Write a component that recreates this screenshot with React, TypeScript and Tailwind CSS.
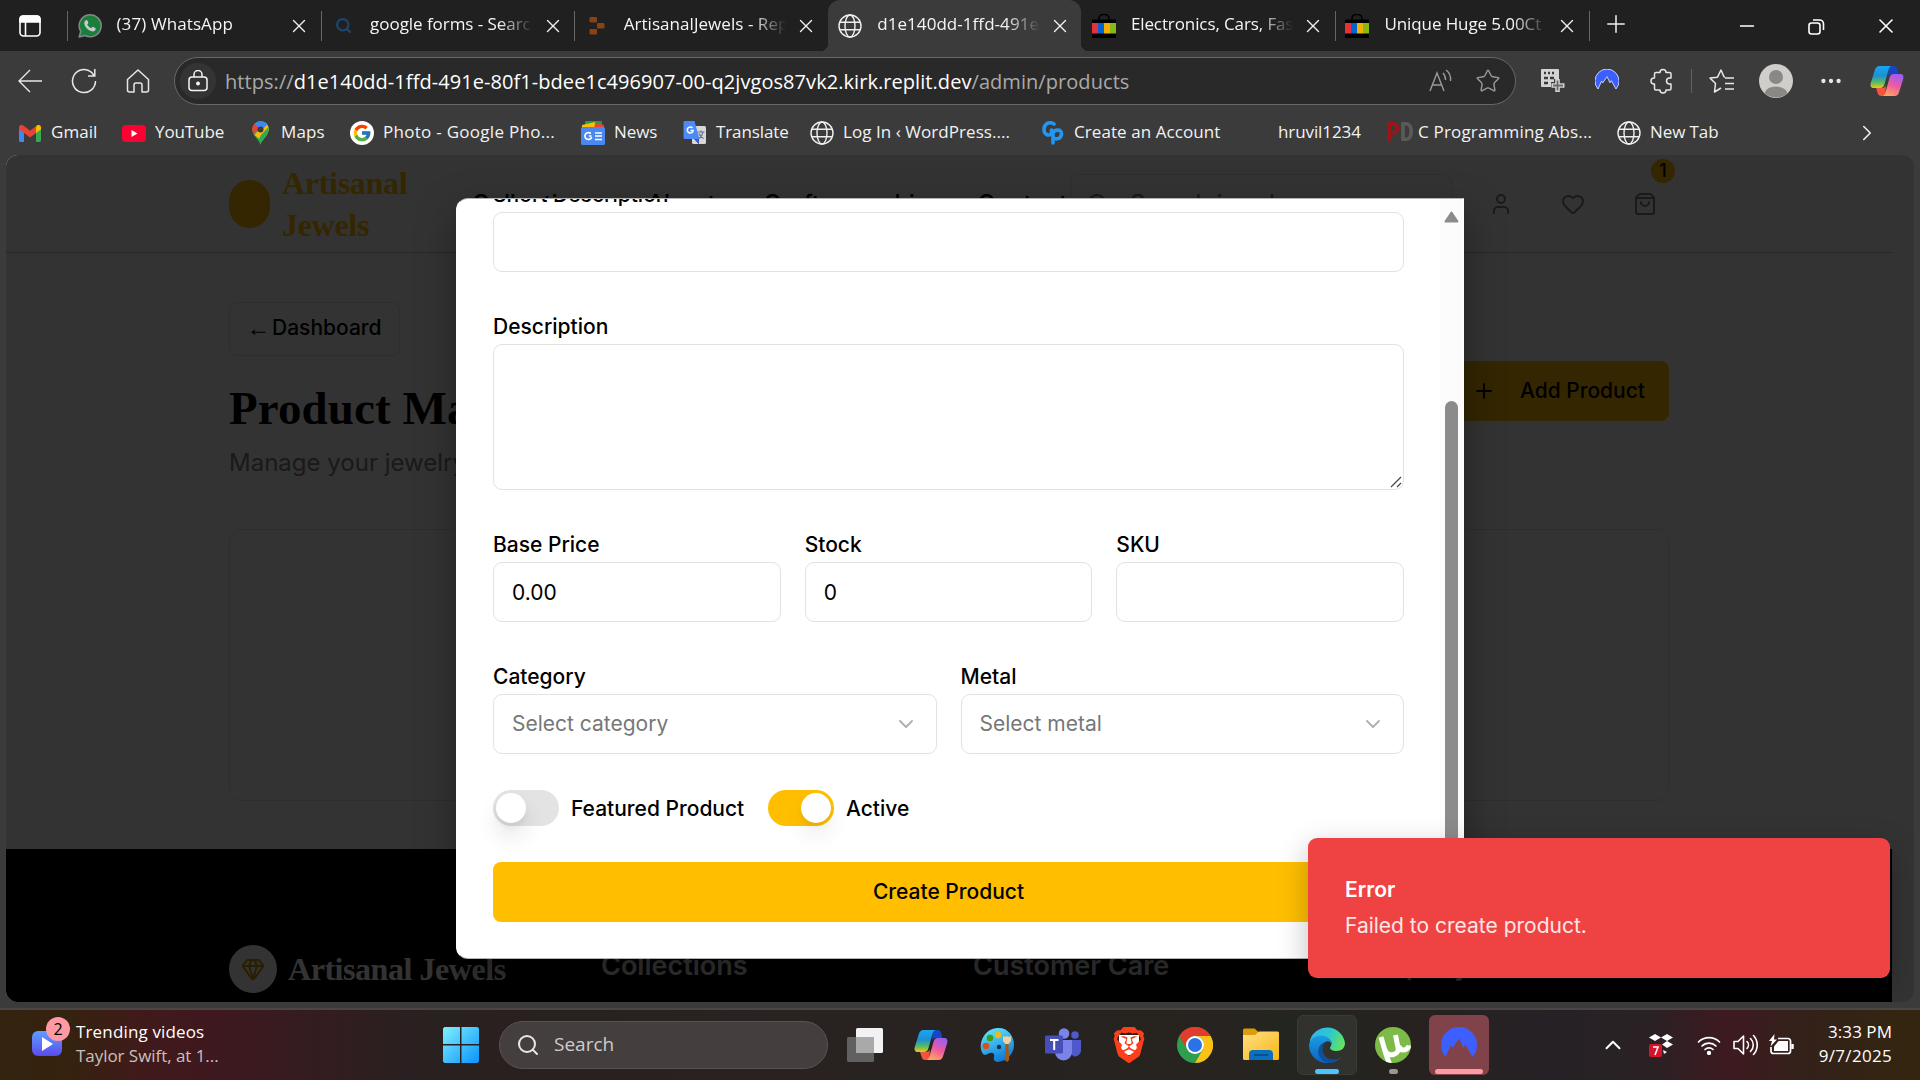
import React from "react";
import {
  ChevronDown, ChevronRight, ChevronUp, Gem, Heart, Minus, MoreHorizontal, Plus,
  Search, ShoppingBag, Star, User, X,
} from "lucide-react";
import { FcGoogle } from "react-icons/fc";
import { SiBrave } from "react-icons/si";

function Globe({ size = 24 }: { size?: number }) {
  return (
    <svg width={size} height={size} viewBox="0 0 24 24" fill="none" stroke="#f0f0f0" strokeWidth="1.4">
      <circle cx="12" cy="12" r="11" />
      <ellipse cx="12" cy="12" rx="5" ry="11" />
      <path d="M2 8.2h20M2 15.8h20" />
    </svg>
  );
}

function WhatsApp() {
  return (
    <svg width="24" height="24" viewBox="0 0 24 24">
      <path d="M1.2 23l1.500-5.600A11 11 0 1 1 7 21.500z" fill="#1b7f3c" stroke="#828a85" strokeWidth="1.500" strokeLinejoin="round" />
      <path d="M8 6.300c.6-.4 1.200-.2 1.400.3l.9 2.100c.1.400 0 .7-.3 1l-.8.9c.9 1.700 2.200 2.900 4 3.700l1.100-1.200c.3-.3.600-.4 1-.2l2 1c.4.2.500.5.400 1-.3 1.700-1.600 2.600-3 2.500C10.500 17 6.500 13 6.300 9.300c0-1.300.7-2.400 1.700-3z" fill="#c9cdca" />
    </svg>
  );
}

function EbayBag() {
  return (
    <svg width="24" height="24" viewBox="0 0 24 24">
      <path d="M7 6V4a4 4 0 0 1 4-3.500h2a4 4 0 0 1 4 3.500v2" fill="none" stroke="#000" strokeWidth="1.600" />
      <rect y="5.500" width="24" height="18.500" fill="#000" />
      <rect y="9" width="6" height="10.500" fill="#e53238" />
      <rect x="6" y="9" width="6" height="10.500" fill="#0064d2" />
      <rect x="12" y="9" width="6" height="10.500" fill="#f5af02" />
      <rect x="18" y="9" width="6" height="10.500" fill="#86b817" />
    </svg>
  );
}

function ReplitMark() {
  return (
    <svg width="16" height="18" viewBox="0 0 16 18" fill="#8a4116">
      <rect x="0.500" width="7.500" height="5.500" rx="1" />
      <rect x="8" y="6" width="7.500" height="5.500" rx="1" />
      <rect x="0.500" y="12" width="7.500" height="5.500" rx="1" />
    </svg>
  );
}

function Copilot({ id, size }: { id: string; size: number }) {
  return (
    <svg width={size} height={size} viewBox="0 0 34 34">
      <defs>
        <linearGradient id={id + "a"} x1="0" y1="0" x2="0" y2="1">
          <stop offset="0" stopColor="#18a5f5" />
          <stop offset="0.450" stopColor="#1f8fd0" />
          <stop offset="0.750" stopColor="#5dbb62" />
          <stop offset="1" stopColor="#f2c811" />
        </linearGradient>
        <linearGradient id={id + "b"} x1="0.700" y1="0" x2="0.300" y2="1">
          <stop offset="0" stopColor="#9a5cf4" />
          <stop offset="0.500" stopColor="#ee5aa0" />
          <stop offset="1" stopColor="#ffa65c" />
        </linearGradient>
      </defs>
      <path d="M19 2h5c2 0 2.800 1.500 3.300 3.500L28.500 10H22c-2 0-3.500 1-4 3z" fill="#1746c4" />
      <path d="M15 32h-4c-2 0-3-1.500-3.500-3.500L6 24h6c2 0 3.500-1 4-3z" fill="#f4553f" />
      <path d="M9.500 2H22c-2 0-2.800 1.500-3.500 4l-4 14c-.7 2.500-1.800 4-4.500 4H4c-3 0-4-2-3.200-5L4.700 6.500C5.500 3.500 7 2 9.500 2z" fill={"url(#" + id + "a)"} />
      <path d="M24.500 32H12c2 0 2.800-1.500 3.500-4l4-14c.7-2.500 1.800-4 4.500-4h6c3 0 4 2 3.200 5l-3.900 12.500c-.8 3-2.300 4.500-4.800 4.500z" fill={"url(#" + id + "b)"} />
    </svg>
  );
}

function NordMark({ size, outline }: { size: number; outline?: boolean }) {
  return (
    <svg width={size} height={size} viewBox="0 0 36 36">
      <path
        d="M4.500 30A18 18 0 1 1 31.500 30L24.500 17.500l-2 3.200L18 11.500 11.500 21l-1.700-2.800z"
        fill="#3e5fff" stroke={outline ? "#dfe4ff" : "none"} strokeWidth="1.300"
      />
    </svg>
  );
}

const tabs = [
  { icon: <WhatsApp />, title: "(37) WhatsApp", tracking: "tracking-[0.1px]" },
  { icon: <Search size={17} color="#1b4871" strokeWidth={3} />, title: "google forms - Search", tracking: "tracking-[-0.05px]" },
  { icon: <ReplitMark />, title: "ArtisanalJewels - Replit", tracking: "tracking-[0.05px]" },
  { icon: <Globe />, title: "d1e140dd-1ffd-491e-80f1", active: true, tracking: "tracking-[0.05px]" },
  { icon: <EbayBag />, title: "Electronics, Cars, Fashion", tracking: "tracking-[-0.1px]" },
  { icon: <EbayBag />, title: "Unique Huge 5.00Ct", tracking: "tracking-[-0.1px]" },
];

function TabStrip() {
  return (
    <div className="flex h-[51px] shrink-0 bg-[#202020]">
      <div className="flex w-[67px] items-center pl-[19px]">
        <svg width="22" height="22" viewBox="0 0 22 22" fill="none" stroke="#fff" strokeWidth="1.600">
          <rect x="1" y="1" width="20" height="20" rx="3.500" />
          <path d="M1 4a3 3 0 0 1 3-3h14a3 3 0 0 1 3 3v3H1z" fill="#fff" />
          <path d="M6.500 7v14" />
        </svg>
      </div>
      {tabs.map((t, i) => (
        <div
          key={t.title}
          className={
            t.active
              ? "relative flex w-[253.6px] items-center rounded-t-xl bg-[#3b3b3b] before:absolute before:-left-2 before:bottom-0 before:size-2 before:bg-[radial-gradient(circle_at_0_0,#202020_8px,#3b3b3b_8.5px)] after:absolute after:-right-2 after:bottom-0 after:z-10 after:size-2 after:bg-[radial-gradient(circle_at_100%_0,#202020_8px,#3b3b3b_8.5px)]"
              : "relative flex w-[253.6px] items-center"
          }
        >
          <span className={i === 3 || i === 4 ? "h-[30px] w-px" : "h-[30px] w-px bg-[#666]"} />
          <span className="flex w-[43px] items-center justify-center">{t.icon}</span>
          <span className={"ml-[5.5px] w-[164.5px] overflow-hidden pb-1 text-[17px] leading-6 whitespace-nowrap text-[#f5f5f5] [mask-image:linear-gradient(90deg,#000_78%,transparent_99%)] " + t.tracking}>
            {t.title}
          </span>
          <X size={22} strokeWidth={1.500} color="#f2f2f2" className="ml-[7px]" />
        </div>
      ))}
      <div className="flex flex-1 items-center justify-between">
        <span className="flex items-center">
          <span className="h-[30px] w-px bg-[#666]" />
          <Plus size={28} strokeWidth={1.300} color="#eee" className="mb-1 ml-[12px]" />
        </span>
        <span className="flex items-center pr-[22px] text-white">
          <Minus size={22} strokeWidth={1.700} />
          <svg className="ml-[47px]" width="22" height="22" viewBox="0 0 22 22" fill="none" stroke="#fff" strokeWidth="1.600">
            <rect x="4" y="8" width="11" height="11" rx="2.500" />
            <path d="M8 5h6.500a4 4 0 0 1 4 4v6" />
          </svg>
          <X size={24} strokeWidth={1.600} className="ml-[47px]" />
        </span>
      </div>
    </div>
  );
}

function AddressRow() {
  return (
    <div className="flex h-[60px] shrink-0 items-center text-[#e8e8e8]">
      <div className="flex w-[174px] items-center pl-[18px]">
        <svg width="24" height="24" viewBox="0 0 24 24" fill="none" stroke="currentColor" strokeWidth="1.400"><path d="M24 12H1M12 1L1 12l11 11" /></svg>
        <svg className="ml-[29px]" width="26" height="26" viewBox="0 0 26 26" fill="none" stroke="currentColor" strokeWidth="1.500">
          <path d="M24.500 13A11.500 11.500 0 1 1 20.500 4.300L23 7.500M23.800 1v7H17" />
        </svg>
        <svg className="ml-[28px]" width="26" height="26" viewBox="0 0 26 26" fill="none" stroke="currentColor" strokeWidth="1.500" strokeLinejoin="round">
          <path d="M2.500 11.500L13 2l10.500 9.500V22a2 2 0 0 1-2 2H17v-7a2 2 0 0 0-2-2h-4a2 2 0 0 0-2 2v7H4.500a2 2 0 0 1-2-2z" />
        </svg>
      </div>
      <div className="flex h-12 w-[1342px] items-center rounded-full border border-[#686868] bg-[#292929] pl-[5px]">
        <span className="flex size-9 items-center justify-center rounded-full bg-[#343434]">
          <svg width="20" height="22" viewBox="0 0 20 22" fill="none" stroke="#f5f5f5" strokeWidth="1.500">
            <rect x="1" y="7" width="18" height="13.500" rx="3" />
            <path d="M6 7V4.500a4 4 0 0 1 8 0V7" />
            <circle cx="10" cy="13.500" r="1.200" fill="#f5f5f5" />
          </svg>
        </span>
        <span className="ml-[9px] w-[1204px] pt-px text-[20px] leading-7 tracking-[0.06px] whitespace-nowrap text-[#a9a9a9]">
          https://<span className="text-white">d1e140dd-1ffd-491e-80f1-bdee1c496907-00-q2jvgos87vk2.kirk.replit.dev</span>/admin/products
        </span>
        <svg width="24" height="24" viewBox="0 0 24 24" fill="none" stroke="#9a9a9a" strokeWidth="1.400">
          <path d="M1 22L8 4l7 18M3.500 16h9M14 4c2 2 2.500 4 2.500 7M17 1c3.500 2.500 5 6 4.500 11" />
        </svg>
        <Star size={26} strokeWidth={1.300} color="#9a9a9a" className="ml-[22px]" />
      </div>
      <div className="flex flex-1 items-center pl-[25px]">
        <svg width="24" height="24" viewBox="0 0 24 24" fill="none">
          <path d="M1 0h16a1 1 0 0 1 1 1v9h-5v3H10v5H1a1 1 0 0 1-1-1V1a1 1 0 0 1 1-1z" fill="#d4d4d4" />
          <path d="M3 4h2M7 4h2M11 4h2M3 9h4M9 9h4M3 14h4" stroke="#3b3b3b" strokeWidth="2.500" />
          <path d="M16.500 10v13M10.500 16.500h13" stroke="#d4d4d4" strokeWidth="4.600" />
          <path d="M16.500 11.500v10M12 16.500h10" stroke="#6a6a6a" strokeWidth="1.800" />
        </svg>
        <span className="ml-[30px]"><NordMark size={24} outline /></span>
        <svg className="ml-[31px]" width="24" height="26" viewBox="0 0 24 26" fill="none" stroke="currentColor" strokeWidth="1.500" strokeLinejoin="round">
          <path d="M6 4.500h4a3 3 0 0 1 6 0h3.500a1.500 1.500 0 0 1 1.500 1.500v4h-1.500a3 3 0 0 0 0 6H21v4.500a1.500 1.500 0 0 1-1.500 1.500H16a3 3 0 0 1-6 0H6a1.500 1.500 0 0 1-1.500-1.500V16H4a3 3 0 0 1 0-6h.5V6A1.500 1.500 0 0 1 6 4.500z" />
        </svg>
        <span className="ml-[17px] h-6 w-px bg-[#606060]" />
        <svg className="ml-[17px]" width="26" height="26" viewBox="0 0 26 26" fill="none" stroke="currentColor" strokeWidth="1.500" strokeLinejoin="round">
          <path d="M16 9l-1-.3L12 2 8.500 9.200 1 10l5.500 5.500L5.500 24l6.500-4M16 10h9M16 15.500h9M16 21h9" />
        </svg>
        <svg className="ml-[24px]" width="34" height="34" viewBox="0 0 34 34">
          <circle cx="17" cy="17" r="17" fill="#d0cecb" />
          <circle cx="17" cy="13" r="7" fill="#8b8784" />
          <path d="M5.500 29a12 9 0 0 1 23 0A17 17 0 0 1 5.500 29z" fill="#8b8784" />
        </svg>
        <MoreHorizontal size={26} className="ml-[25px]" />
        <span className="ml-[26px]"><Copilot id="top" size={34} /></span>
      </div>
    </div>
  );
}

const bookmarks = [
  {
    w: "w-[104px]", tracking: "tracking-[0.05px]", label: "Gmail", icon: (
      <svg width="22" height="17" viewBox="0 0 22 17">
        <path d="M0 3v12.500C0 16.300.7 17 1.500 17H5V7z" fill="#4285f4" />
        <path d="M22 3v12.500c0 .8-.7 1.500-1.500 1.500H17V7z" fill="#34a853" />
        <path d="M17 2v6l5-3.500V2.500C22 .3 19.500-.8 17.700.6z" fill="#fbbc04" />
        <path d="M0 2.500v2L5 8l6 4.500L17 8V1.200l-6 4.500L4.300.6C2.500-.8 0 .3 0 2.500z" fill="#ea4335" />
      </svg>
    ),
  },
  {
    w: "w-[126px]", tracking: "tracking-[-0.1px]", label: "YouTube", icon: (
      <svg width="24" height="17" viewBox="0 0 24 17"><rect width="24" height="17" rx="4" fill="#ff0033" /><path d="M9.500 5l6 3.500-6 3.500z" fill="#fff" /></svg>
    ),
  },
  {
    w: "w-[102px]", tracking: "tracking-[0.15px]", label: "Maps", icon: (
      <svg width="17" height="24" viewBox="0 0 17 24">
        <path d="M8.500 24C7.500 19 1 15.500.3 9A8.200 8.200 0 0 1 8.500 0a8.300 8.300 0 0 1 8.200 9C16 15.500 9.500 19 8.500 24z" fill="#34a853" />
        <path d="M2.500 14L13 1.500A8.300 8.300 0 0 1 16.500 10L8 18.500z" fill="#fbbc04" />
        <path d="M9 14l7.500-8c1.200 7-4 10.500-5.500 13.500L6 20z" fill="#34a853" />
        <path d="M2.300 3.200A8.300 8.300 0 0 1 15.200 3.500L8 11z" fill="#4285f4" />
        <path d="M2.500 3a8.200 8.200 0 0 0-1 9.500L8 8z" fill="#ea4335" />
        <circle cx="8.500" cy="8.500" r="3" fill="#3b3b3b" />
      </svg>
    ),
  },
  { w: "w-[231px]", tracking: "tracking-[0.28px]", label: "Photo - Google Pho...", icon: <span className="flex size-6 items-center justify-center rounded-full bg-white"><FcGoogle size={20} /></span> },
  {
    w: "w-[102px]", tracking: "tracking-[-0.1px]", label: "News", icon: (
      <svg width="24" height="24" viewBox="0 0 24 24">
        <rect x="4" width="17" height="8" rx="1" fill="#1e9e4a" /><path d="M1 4l13-3 2 6H1z" fill="#fbbc04" /><path d="M14 2l9 2v5H13z" fill="#ea4335" />
        <rect y="6" width="24" height="18" rx="1.500" fill="#4a88f0" />
        <path d="M10.500 15H7.800M9.800 12.700a3.400 3.400 0 1 0 .8 3.300M14 12h7M14 15h7M14 18.500h7" stroke="#fff" strokeWidth="1.700" fill="none" />
      </svg>
    ),
  },
  {
    w: "w-[127px]", tracking: "tracking-[-0.1px]", label: "Translate", icon: (
      <svg width="24" height="24" viewBox="0 0 24 24">
        <rect x="9" y="5" width="14" height="18" rx="1.500" fill="#d8d8d8" /><path d="M11 18l5 5.500V18z" fill="#3a57c4" />
        <path d="M1.500 0h10l5 18H2a1.500 1.500 0 0 1-1.500-1.500V1.500A1.500 1.500 0 0 1 1.500 0z" fill="#4c8bf5" />
        <path d="M9.500 7a3 3 0 1 0 .7 2.500H7.500" stroke="#fff" strokeWidth="1.500" fill="none" />
        <path d="M14.500 11h7M18 9.500V11M20 11c-.5 3-2 5-4 6.500M16 12.500c1 2.500 2.500 4 4.500 5" stroke="#64748b" strokeWidth="1.200" fill="none" />
      </svg>
    ),
  },
  { w: "w-[231px]", tracking: "tracking-[0.05px]", label: "Log In ‹ WordPress....", icon: <Globe /> },
  {
    w: "w-[204px]", tracking: "tracking-[0.08px]", label: "Create an Account", icon: (
      <svg width="22" height="24" viewBox="0 0 22 24" fill="none" stroke="#2196f3" strokeWidth="3.600" strokeLinecap="round">
        <path d="M12 3C6-.5 2 4 2 8.500s4 7 7.500 4.500V9M11 12.500V22M11 12c1-3.500 9-4.500 8.500 1s-6 5.500-7.500 4" />
      </svg>
    ),
  },
  { w: "w-[140px]", tracking: "tracking-[-0.1px]", label: "hruvil1234", icon: <span className="w-6" /> },
  {
    w: "w-[232px]", tracking: "tracking-[0.18px]", label: "C Programming Abs...", icon: (
      <span className="ml-1 flex font-['Roboto'] text-[25px] leading-6 font-black tracking-[-2px]"><b className="scale-x-[0.85] text-[#a31217]">P</b><b className="scale-x-[0.85] text-[#5c5959]">D</b></span>
    ),
  },
  { w: "w-[110px]", tracking: "tracking-[-0.1px]", label: "New Tab", icon: <Globe /> },
];

function BookmarkBar() {
  return (
    <div className="flex h-[44px] shrink-0 items-center pl-[18px]">
      {bookmarks.map((b) => (
        <div key={b.label} className={"flex shrink-0 items-center " + b.w}>
          <span className="flex w-6 shrink-0 items-center justify-center">{b.icon}</span>
          <span className={"ml-[9px] pb-0.5 text-[17px] leading-6 whitespace-nowrap text-[#f2f2f2] " + b.tracking}>{b.label}</span>
        </div>
      ))}
      <ChevronRight size={26} strokeWidth={1.500} color="#eee" className="mr-[40px] ml-auto" />
    </div>
  );
}

function StorePage() {
  return (
    <div className="flex h-[847px] w-[1886px] flex-col bg-white font-['Inter',sans-serif] text-black">
      <header className="flex h-[98px] shrink-0 items-center border-b border-[#c4c4c4] pl-[223px]">
        <div className="flex w-[243px] items-center">
          <span className="h-12 w-[41px] rounded-full bg-[#ffbf00]" />
          <span className="ml-3 w-[150px] font-['Liberation_Serif',serif] text-[32px] leading-[42px] font-bold tracking-[-0.3px] text-[#ffbf00]">Artisanal Jewels</span>
        </div>
        <nav className="flex w-[598px] gap-12 text-[24px] font-medium tracking-[-0.1px]">
          <span>Collections</span><span>About</span><span>Craftsmanship</span><span>Contact</span>
        </nav>
        <div className="flex h-[60px] w-[382px] items-center gap-5 rounded-lg border border-[#e5e5e5] pl-[15px] text-[24px] text-[#737373]">
          <Search size={24} /> <span>Search jewelry...</span>
        </div>
        <div className="ml-[37px] flex items-center gap-12 text-[#808080]">
          <User size={24} /><Heart size={24} />
          <span className="relative"><ShoppingBag size={24} />
            <span className="absolute -top-[33px] left-[18px] flex size-6 items-center justify-center rounded-full bg-[#ffbf00] text-[18px] font-medium text-black">1</span>
          </span>
        </div>
      </header>
      <main className="flex flex-1 flex-col px-[223px] pt-12 pb-12">
        <div className="flex h-[180px] items-center justify-between">
          <div className="flex flex-col items-start">
            <button className="flex h-[54px] w-[171px] items-center rounded-lg border border-[#e5e5e5] pb-0.5 pl-[15px] text-[21px] font-medium">
              <span className="w-[27px] font-['Liberation_Sans'] text-[24px] leading-6 font-normal">←</span>Dashboard
            </button>
            <h1 className="mt-[23px] font-['Liberation_Serif',serif] text-[47px] leading-[58px] font-bold tracking-[0.1px]">Product Management</h1>
            <p className="mt-2 text-[24px] leading-9 text-[#808080]">Manage your jewelry inventory</p>
          </div>
          <button className="flex h-[60px] w-[226px] items-center justify-end gap-6 rounded-lg bg-[#ffbf00] pr-6 text-[21px] font-medium">
            <Plus size={24} strokeWidth={1.800} />Add Product
          </button>
        </div>
        <div className="mt-12 h-[272px] rounded-xl border border-[#e5e5e5]" />
      </main>
      <footer className="flex h-[153px] shrink-0 items-center bg-black pt-[87px] pl-[223px] text-white">
        <span className="flex size-12 items-center justify-center rounded-full bg-white"><Gem size={24} color="#c79500" /></span>
        <span className="ml-[11px] w-[313px] font-['Liberation_Serif',serif] text-[32px] font-bold tracking-[-0.45px]">Artisanal Jewels</span>
        <span className="w-[372px] pb-1.5 text-[27px] font-semibold">Collections</span>
        <span className="w-[372px] pb-1.5 text-[27px] font-semibold">Customer Care</span>
        <span className="pb-1.5 text-[27px] font-semibold">Company</span>
      </footer>
    </div>
  );
}

function Field({ label, value }: { label: string; value?: string }) {
  return (
    <div className="flex flex-1 flex-col">
      <span className="h-[33px] leading-[32px]">{label}</span>
      <div className="flex h-[60px] items-center rounded-[9px] border border-[#e2e2e2] pt-0.5 pl-[18px] font-normal">{value}</div>
    </div>
  );
}

function SelectField({ label, value }: { label: string; value: string }) {
  return (
    <div className="flex flex-1 flex-col">
      <span className="h-[33px] leading-[32px]">{label}</span>
      <div className="flex h-[60px] items-center justify-between rounded-[9px] border border-[#e2e2e2] pr-[18px] pl-[18px] font-normal text-[#777]">
        {value}<ChevronDown size={24} strokeWidth={1.900} color="#b0b0b0" />
      </div>
    </div>
  );
}

function ProductDialog() {
  return (
    <div className="absolute top-[43px] left-[450px] flex h-[761px] w-[1008px] overflow-hidden rounded-tl-xl rounded-b-xl border border-[#b5b2b4] border-x-transparent bg-white font-['Inter',sans-serif] text-[21px] font-medium text-black shadow-[0_15px_40px_rgba(0,0,0,0.35)]">
      <div className="w-[983px] pl-9 pr-[36px]">
        <div className="-mt-[21px] h-[33px] leading-[34px]">Short Description</div>
        <div className="mt-[1px] h-[60px] rounded-[9px] border border-[#e2e2e2]" />
        <div className="mt-[39px] h-[33px] leading-[32px]">Description</div>
        <div className="flex h-[146px] items-end justify-end rounded-[9px] border border-[#e2e2e2] pr-px pb-px">
          <svg width="12" height="12" viewBox="0 0 12 12" stroke="#444" strokeWidth="1.200"><path d="M1 11L11 1M7 11l4-4" /></svg>
        </div>
        <div className="mt-[39px] flex gap-6">
          <Field label="Base Price" value="0.00" /><Field label="Stock" value="0" /><Field label="SKU" />
        </div>
        <div className="mt-[39px] flex gap-6">
          <SelectField label="Category" value="Select category" /><SelectField label="Metal" value="Select metal" />
        </div>
        <div className="mt-9 flex h-9 items-center">
          <span className="flex h-9 w-[66px] items-center rounded-full bg-[#e3e3e3] pl-[3px]"><span className="size-[30px] rounded-full bg-white shadow-[0_14px_22px_rgba(0,0,0,0.1),0_4px_6px_rgba(0,0,0,0.05)]" /></span>
          <span className="ml-3 w-[197px] pt-0.5">Featured Product</span>
          <span className="flex h-9 w-[66px] items-center justify-end rounded-full bg-[#ffbf00] pr-[3px]"><span className="size-[30px] rounded-full bg-white shadow-[0_14px_22px_rgba(0,0,0,0.07),0_4px_6px_rgba(0,0,0,0.05)]" /></span>
          <span className="ml-3 pt-0.5">Active</span>
        </div>
        <div className="mt-9 flex h-[60px] items-center justify-center rounded-lg bg-[#ffbf00]">Create Product</div>
      </div>
      <div className="flex w-[23px] flex-col items-center bg-[#fcfcfc] pt-3">
        <svg width="15" height="12" viewBox="0 0 15 12"><path d="M7.500 1.500L13.500 10.500h-12z" fill="#8b8b8b" stroke="#8b8b8b" strokeWidth="2" strokeLinejoin="round" /></svg>
        <div className="mt-[178px] w-[13px] flex-1 rounded-full bg-[#8b8b8b]" />
      </div>
    </div>
  );
}

function Toast() {
  return (
    <div className="absolute top-[683px] left-[1302px] flex h-[140px] w-[582px] flex-col justify-center rounded-[9px] bg-[#ef4343] pb-0.5 pl-[37px] font-['Inter',sans-serif] text-[21px] text-white shadow-[0_10px_30px_rgba(0,0,0,0.25)]">
      <div className="mt-px h-[32px] leading-[31px] font-semibold">Error</div>
      <div className="mt-1 h-[32px] leading-[32px] text-[#fde6e6]">Failed to create product.</div>
    </div>
  );
}

function WindowsLogo() {
  return (
    <svg width="36" height="36" viewBox="0 0 36 36">
      <defs><linearGradient id="win" x1="0" y1="0" x2="1" y2="1"><stop offset="0" stopColor="#7ff0ff" /><stop offset="1" stopColor="#0a93fb" /></linearGradient></defs>
      <path d="M1.500 0H17v17H0V1.500zM18.500 0h16L36 1.500V17H18.500zM0 18.500h17V36H1.500L0 34.500zM18.500 18.500H36v16L34.500 36h-16z" fill="url(#win)" />
    </svg>
  );
}

function Paint() {
  return (
    <svg width="34" height="36" viewBox="0 0 34 36">
      <defs><linearGradient id="paint" x1="0.300" y1="0" x2="0.700" y2="1"><stop offset="0" stopColor="#5fe4fb" /><stop offset="1" stopColor="#0a72d4" /></linearGradient></defs>
      <path d="M17 1C27 0 34 8 34 18c0 9-7 16-16 17-3 0-5-2-4-5s-1-5-4-4-5 3-7 1C-3 19 3 2 17 1z" fill="url(#paint)" />
      <circle cx="6" cy="19" r="3.300" fill="#d9501e" /><circle cx="10" cy="11" r="3.300" fill="#3f9c10" /><circle cx="18" cy="8" r="3.200" fill="#f5b80d" /><circle cx="19" cy="20" r="2.200" fill="#08355c" />
      <path d="M23 9l2 1 2-1 2 1 2-1v5l-2.500 3h-3L23 14z" fill="#f1cf9e" /><path d="M25.500 17h3l.7 16-2.200 2-2.200-2z" fill="#a35a18" />
    </svg>
  );
}

function Teams() {
  return (
    <svg width="36" height="34" viewBox="0 0 36 34">
      <circle cx="30" cy="7" r="3.800" fill="#5059c9" /><path d="M24 12h12v10c0 4-3 6.500-7 6.500l-5-4z" fill="#5059c9" />
      <circle cx="19" cy="5.500" r="5.300" fill="#7b83eb" /><path d="M10 12h17v12a8.500 8.500 0 0 1-17 0z" fill="#7b83eb" />
      <rect y="7.500" width="18" height="18" rx="1.500" fill="#464eb8" />
      <path d="M5 12h8.500M9.200 12v10" stroke="#fff" strokeWidth="2" />
    </svg>
  );
}

function Chrome() {
  return (
    <svg width="36" height="36" viewBox="0 0 36 36">
      <circle cx="18" cy="18" r="18" fill="#2f9e4f" />
      <path d="M2.400 9A18 18 0 0 1 33.600 9H18a9 9 0 0 0-7.800 13.500z" fill="#e33b2e" />
      <path d="M33.600 9A18 18 0 0 1 18 36l7.800-13.500A9 9 0 0 0 18 9z" fill="#fbc116" />
      <circle cx="18" cy="18" r="9" fill="#fff" /><circle cx="18" cy="18" r="7" fill="#2a72e5" />
    </svg>
  );
}

function Explorer() {
  return (
    <svg width="36" height="34" viewBox="0 0 36 34">
      <defs><linearGradient id="fold" x1="0" y1="0" x2="1" y2="1"><stop offset="0" stopColor="#ffe083" /><stop offset="1" stopColor="#f8b616" /></linearGradient></defs>
      <path d="M0 2a1.500 1.500 0 0 1 1.500-1.500h10L15.500 4H34a2 2 0 0 1 2 2v6H0z" fill="#dc9b0b" />
      <path d="M0 7h12l4-3.500h18.500A1.500 1.500 0 0 1 36 5v25.500a1.500 1.500 0 0 1-1.500 1.500h-33A1.500 1.500 0 0 1 0 30.500z" fill="url(#fold)" />
      <path d="M6 32V26a4 4 0 0 1 4-4h16a4 4 0 0 1 4 4v6z" fill="#0a70bd" /><path d="M11 27h14" stroke="#06467d" strokeWidth="1.500" />
    </svg>
  );
}

function Edge() {
  return (
    <svg width="36" height="36" viewBox="0 0 36 36">
      <defs>
        <linearGradient id="eg1" x1="0" y1="0.300" x2="1" y2="0.600"><stop offset="0" stopColor="#35b5ec" /><stop offset="0.500" stopColor="#2bc8cf" /><stop offset="1" stopColor="#66e45b" /></linearGradient>
        <linearGradient id="eg2" x1="0" y1="0" x2="0" y2="1"><stop offset="0" stopColor="#1b9de2" /><stop offset="1" stopColor="#0a62c0" /></linearGradient>
      </defs>
      <path d="M1 13A18 18 0 0 1 36 16c0 5-3.500 8-8.500 8-4 0-6.500-1.500-6.500-3s1.500-2 1.500-4.500c0-3.500-4-6.500-9-6.500-6 0-10 4-12.500 9z" fill="url(#eg1)" />
      <path d="M0 18c1-6 6-9.500 12-9.500 6 0 10.500 4 10.500 8-1-1.500-3-2.500-5-2-4 1-5 5-4 10s5 9.500 11 10.500A18 18 0 0 1 0 18z" fill="url(#eg2)" />
      <path d="M13.500 22c-.5 6 5 11 12 10.500 3-.2 5.500-1.500 7.500-3.500-3 4.500-7 7-12.500 7C12 35 8 28 9.500 22c.8-3.500 3.500-6 7-7-2 1.500-2.800 4-3 7z" fill="#114f96" />
    </svg>
  );
}

function Utorrent() {
  return (
    <svg width="36" height="36" viewBox="0 0 36 36">
      <defs><clipPath id="ut"><circle cx="18" cy="18" r="18" /></clipPath></defs>
      <circle cx="18" cy="18" r="18" fill="#7dba48" />
      <g clipPath="url(#ut)" stroke="#fff" strokeWidth="5" fill="none">
        <path d="M6 10l5.500 19M11.500 29l3.500 9" /><path d="M9.500 22c1.500 5 5 6.500 9 5.500s5.500-4 4.300-8L20.500 8M23.800 19c1.200 3.800 3.200 4.500 5.800 3.800s4-2 4.400-4.300" />
      </g>
    </svg>
  );
}

function Taskbar() {
  return (
    <div className="flex h-[70px] shrink-0 items-center bg-[linear-gradient(90deg,#33230f_0px,#35220f_70px,#401a1a_140px,#3f181f_210px,#341c20_310px,#2a2021_410px,#28211d_600px,#2a2222_750px,#27221f_1000px,#262420_1250px,#22261f_1300px,#27221f_1400px,#262126_1550px,#2a2124_1650px,#3e1a20_1730px,#33211a_1800px,#33260f_1920px)] text-white">
      <div className="flex w-[443px] items-center pl-8">
        <span className="relative mb-[3px] flex h-[25px] w-[30px] items-center justify-center rounded-md bg-gradient-to-b from-[#5f9bff] to-[#5b49ec]">
          <svg width="12" height="14" viewBox="0 0 12 14"><path d="M1 0l11 7-11 7z" fill="#fff" /></svg>
          <span className="absolute -top-[14px] left-[14px] flex size-6 items-center justify-center rounded-full bg-[#ff99a4] text-[16px] leading-6 text-black">2</span>
        </span>
        <span className="mb-0.5 ml-[14px] flex flex-col text-[17px] leading-6 whitespace-nowrap">
          <span className="tracking-[0.15px]">Trending videos</span><span className="tracking-[-0.05px] text-[#c9c1c0]">Taylor Swift, at 1...</span>
        </span>
      </div>
      <WindowsLogo />
      <div className="ml-5 flex h-12 w-[329px] items-center rounded-full border border-[#585351] bg-[#443f3e] pl-[16px]">
        <Search size={24} strokeWidth={2} color="#e8e8e8" />
        <span className="ml-[14px] pb-0.5 text-[19px] text-[#cfcccb]">Search</span>
      </div>
      <div className="flex h-full items-center pl-1">
        <span className="flex w-[66px] justify-center">
          <svg width="36" height="34" viewBox="0 0 36 34"><rect x="9" y="0" width="27" height="25" rx="1.500" fill="#f2f2f2" /><rect y="9" width="27" height="25" rx="1.500" fill="#606060" /><path d="M9 9h18v16H9z" fill="#a9a9a9" /></svg>
        </span>
        <span className="flex w-[66px] justify-center"><Copilot id="bar" size={34} /></span>
        <span className="flex w-[66px] justify-center"><Paint /></span>
        <span className="flex w-[66px] justify-center"><Teams /></span>
        <span className="flex w-[66px] justify-center">
          <span className="relative flex items-center justify-center">
            <span className="absolute size-5 bg-white" />
            <SiBrave size={36} color="#fb3f1c" className="relative" />
          </span>
        </span>
        <span className="flex w-[66px] justify-center"><Chrome /></span>
        <span className="flex w-[66px] justify-center"><Explorer /></span>
        <span className="flex w-[66px] justify-center">
          <span className="flex h-[60px] w-[60px] flex-col items-center rounded-md border border-[#3a3b36] bg-[#31322d] pt-[11px]"><Edge /><span className="mt-1.5 h-[5px] w-6 rounded-full bg-[#4cc2ff]" /></span>
        </span>
        <span className="flex w-[66px] justify-center">
          <span className="flex h-[60px] flex-col items-center pt-3"><Utorrent /><span className="mt-1.5 h-[5px] w-[9px] rounded-full bg-[#9a9896]" /></span>
        </span>
        <span className="flex w-[66px] justify-center">
          <span className="flex h-[60px] w-[60px] flex-col items-center rounded-md bg-[#80434a] pt-3"><NordMark size={36} /><span className="mt-1.5 h-[5px] w-12 rounded-full bg-[#ff99a4]" /></span>
        </span>
      </div>
      <div className="ml-auto flex items-center pr-7">
        <ChevronUp size={26} strokeWidth={1.800} />
        <svg className="ml-[23px]" width="24" height="24" viewBox="0 0 24 24">
          <path d="M6 2l6 3.500L6 9 0 5.500zM18 2l6 3.500L18 9l-6-3.500zM18 9l6 3.500-6 3.500-5-3.500zM14 18l4 2-3 2z" fill="#fff" transform="translate(0 -1)" />
          <rect y="11" width="13" height="13" rx="2" fill="#d9122c" />
          <path d="M4 14h5l-3 8" stroke="#fff" strokeWidth="1.500" fill="none" />
        </svg>
        <svg className="ml-[24px]" width="24" height="20" viewBox="0 0 24 20" fill="none" stroke="#fff" strokeWidth="1.700" strokeLinecap="round">
          <path d="M1.500 7a15 15 0 0 1 21 0M5 11a10 10 0 0 1 14 0M8 14.500a5.700 5.700 0 0 1 8 0" /><circle cx="12" cy="18" r="1.300" fill="#fff" />
        </svg>
        <svg className="ml-[12px]" width="25" height="22" viewBox="0 0 25 22" fill="none" stroke="#fff" strokeWidth="1.600" strokeLinejoin="round" strokeLinecap="round">
          <path d="M1 7.500h4L10.500 2v18L5 14.500H1zM14 7.500a5 5 0 0 1 0 7M17.500 4.500a9 9 0 0 1 0 13M20.500 1.500a14 14 0 0 1 0 19" />
        </svg>
        <svg className="ml-[11px]" width="25" height="22" viewBox="0 -2 25 22" fill="none" stroke="#fff" strokeWidth="1.700">
          <path d="M9 2.500h10A2.500 2.500 0 0 1 21.500 5v10a2.500 2.500 0 0 1-2.500 2.500H4.500A2.500 2.500 0 0 1 2 15v-4" /><path d="M9.500 5H19v10H5v-4.500z" fill="#fff" stroke="none" />
          <path d="M23.500 8v5" strokeWidth="2.500" /><path d="M5.500-2L0 5h3L1.500 10.500 8 3.500H5z" fill="#fff" stroke="none" />
        </svg>
        <span className="mb-0.5 ml-[25px] flex w-[73px] flex-col items-end text-[17px] leading-6 whitespace-nowrap">
          <span className="tracking-[0.05px]">3:33 PM</span><span className="tracking-[0.3px]">9/7/2025</span>
        </span>
      </div>
    </div>
  );
}

export default function App() {
  return (
    <div className="flex h-[1080px] w-[1920px] flex-col overflow-hidden bg-[#3b3b3b] font-['Open_Sans',sans-serif]">
      <TabStrip />
      <AddressRow />
      <BookmarkBar />
      <div className="relative mx-1.5 h-[847px] shrink-0 overflow-hidden rounded-xl bg-[#333]">
        <StorePage />
        <div className="absolute inset-y-0 left-0 w-[1886px] bg-black/80" />
        <ProductDialog />
        <Toast />
      </div>
      <div className="h-2 shrink-0 border-b-2 border-[#4b4643]" />
      <Taskbar />
    </div>
  );
}
